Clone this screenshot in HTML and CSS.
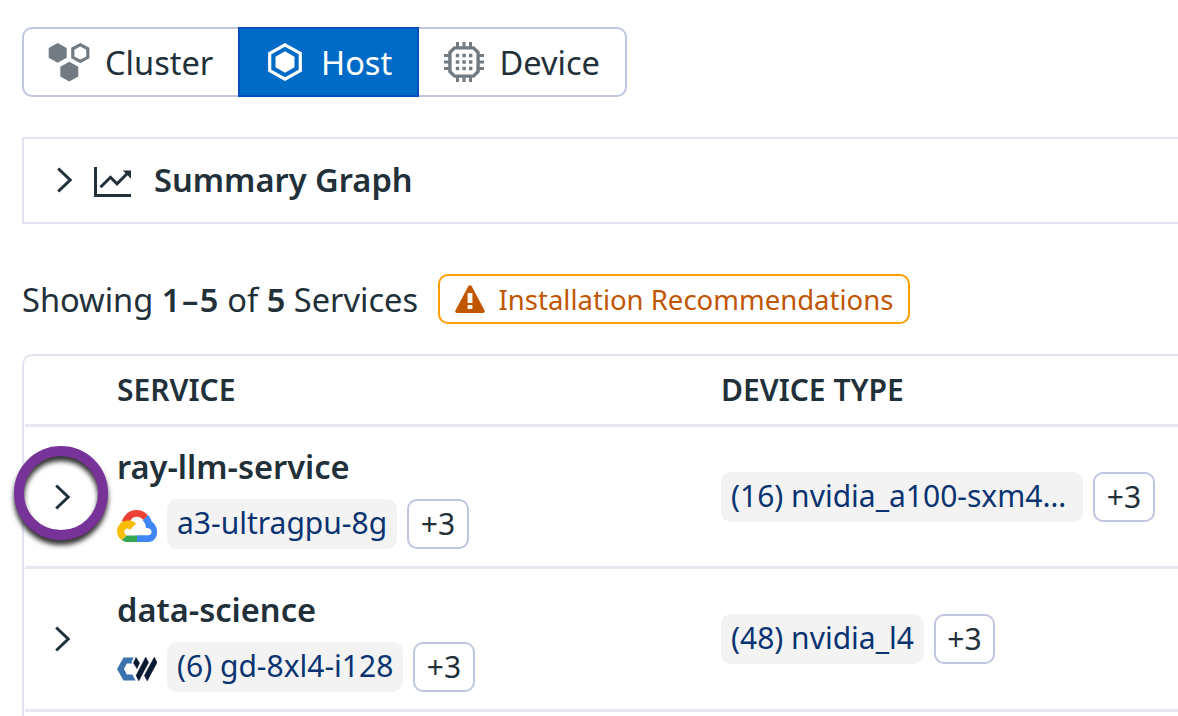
FILE: index.html
```html
<!DOCTYPE html>
<html lang="en">
<head>
<meta charset="utf-8">
<title>Services</title>
<link rel="stylesheet" href="styles.css">
</head>
<body>
<main class="page">
  <nav class="tabs">
    <button class="tab tab-cluster">
      <svg class="icon" width="42" height="42" viewBox="0 0 42 42" fill="#737b82">
        <path d="M9.7 2 18.7 7v9.8l-9 4.9-9-4.9V7zM21.3 20.8l9 5v9.8l-9 4.9-9-4.9v-9.8z"/>
        <path d="M32.3 3.700 39.800 7.800v8.500L32.300 20.400l-7.500-4.100V7.800z" fill="none" stroke="#737b82" stroke-width="3.200"/>
      </svg>
      <span>Cluster</span>
    </button>
    <button class="tab tab-host">
      <svg class="icon" width="36" height="40" viewBox="0 0 36 40">
        <path d="M18 2.900 33.300 11.400v17.200L18 37.100 2.700 28.600V11.400z" fill="none" stroke="#fff" stroke-width="3.200"/>
        <path d="M18 9.300 27.500 14.700v10.600L18 30.700 8.500 25.300V14.700z" fill="#fff"/>
      </svg>
      <span>Host</span>
    </button>
    <button class="tab tab-device">
      <svg class="icon" width="40" height="40" viewBox="0 0 40 40" fill="none" stroke="#737b82" stroke-width="3">
        <path d="M10.500 5.900h19l4.600 4.600v19l-4.600 4.600h-19l-4.600-4.600v-19z" stroke-width="3.400" stroke-linejoin="round"/>
        <path d="M13.500 0v5M20 0v5M26.500 0v5M13.500 35v5M20 35v5M26.500 35v5M0 13.500h5M0 20h5M0 26.500h5M35 13.500h5M35 20h5M35 26.500h5"/>
        <path d="M11.800 13.500h17M11.800 20h17M11.800 26.500h17" stroke-width="3.400" stroke-dasharray="3.400 3.200"/>
      </svg>
      <span>Device</span>
    </button>
  </nav>

  <section class="summary">
    <svg class="chevron" width="18" height="28" viewBox="0 0 18 28"><path d="M2.200 2.500 14.200 14 2.200 25.500"/></svg>
    <svg class="chart" width="38" height="31" viewBox="0 0 38 31" fill="none" stroke="#22303a" stroke-width="3">
      <path d="M1.500 0v28.500H37"/>
      <path d="M6.500 20.300 16.500 10.300 23 16.800 34 5.800"/>
      <path d="M28.800 3.500H37v8.200z" fill="#22303a" stroke="none"/>
    </svg>
    <h2 class="summary-title">Summary Graph</h2>
  </section>

  <div class="status">
    <p class="count">Showing <b class="range">1–5</b> of <b>5</b> Services</p>
    <button class="recommend">
      <svg width="30" height="28" viewBox="0 0 30 28">
        <path d="M13.300 1.200Q15-.8 16.700 1.200L29.600 25.500Q30.300 27.800 28 28H2Q-.3 27.800.4 25.500z" fill="#c15600"/>
        <path d="M12.600 8h4.800v10h-4.800zM12.600 20h4.800v4h-4.800z" fill="#fff"/>
      </svg>
      <span>Installation Recommendations</span>
    </button>
  </div>

  <section class="table">
    <div class="row head">
      <div></div>
      <div class="th">SERVICE</div>
      <div class="th">DEVICE TYPE</div>
    </div>
    <div class="row">
      <div class="expand">
        <svg class="chevron" width="18" height="28" viewBox="0 0 18 28"><path d="M2.200 2.500 14.200 14 2.200 25.500"/></svg>
        <span class="ring"></span>
      </div>
      <div class="service">
        <h3 class="name">ray-llm-service</h3>
        <div class="tags">
          <svg class="provider" width="40" height="32" viewBox="0 0 40 32">
            <path d="M26.400 10 31 5.400C25.200-1.600 14-1.700 8.300 5.200 6.500 7.300 5.300 9.300 4.900 11.700L13 11.300c3.200-6 9.300-5.600 13.400-1.300z" fill="#ea4335"/>
            <path d="M34.600 11.600C34 9 32.900 7 31 5.300L25.700 10.600c2 1.700 3.200 4.200 3.200 7.400 7.200-.3 7.200 7.300 2 7.300H20V32h11.500c9.800-.7 11.900-14.500 3.100-20.400z" fill="#4285f4"/>
            <path d="M9.500 25.400H20V32H11c-2.400 0-4.300-.8-6.200-2.100z" fill="#34a853"/>
            <path d="M11 10.400C.7 10.300-4.200 23.200 4.600 30l5-4.900c-5-2.500-1-9.400 3.400-5.400l6.200-6.200c-2.100-2.200-4.700-3.100-8.200-3.100z" fill="#fbbc05"/>
          </svg>
          <span class="pill pill-ultra">a3-ultragpu-8g</span>
          <span class="more">+3</span>
        </div>
      </div>
      <div class="devices">
        <span class="pill pill-a100">(16) nvidia_a100-sxm4…</span>
        <span class="more">+3</span>
      </div>
    </div>
    <div class="row row-tall">
      <div class="expand">
        <svg class="chevron" width="18" height="28" viewBox="0 0 18 28"><path d="M2.200 2.500 14.200 14 2.200 25.500"/></svg>
      </div>
      <div class="service">
        <h3 class="name">data-science</h3>
        <div class="tags">
          <svg class="provider" width="40" height="24" viewBox="0 0 40 24">
            <path d="M6.500.5H16.800L14.600 4.500 15 6.500H9.800L7 12l2.800 5.500H15.300L18.600 23.500H6.500L0 12z" fill="#3b73af"/>
            <path d="M19 .3 22.600 6 20 11.700 16.400 6zM28.700 0 31.600 5.500 21.800 24 19 18.500zM37.300 0 40.100 5.500 30.200 24 27.300 18.500z" fill="#0b1a33" stroke="#0b1a33" stroke-width=".4"/>
          </svg>
          <span class="pill pill-gd">(6) gd-8xl4-i128</span>
          <span class="more">+3</span>
        </div>
      </div>
      <div class="devices">
        <span class="pill pill-l4">(48) nvidia_l4</span>
        <span class="more more-narrow">+3</span>
      </div>
    </div>
  </section>
</main>
</body>
</html>
```
FILE: styles.css
```css
* { box-sizing: border-box; }
body {
  margin: 0;
  overflow: hidden;
  background: #fff;
  color: #22303a;
  font-family: "Noto Sans", sans-serif;
}
h2, h3, p { margin: 0; }
svg { flex: none; display: block; }
button { font: inherit; color: inherit; background: #fff; }

.page { height: 716px; padding: 27px 0 0 22px; overflow: hidden; }

.tabs { display: flex; width: 605px; height: 70px; }
.tab {
  display: flex;
  align-items: center;
  height: 70px;
  padding: 0;
  border: 2px solid #c0c6e0;
  font-size: 32.600px;
  line-height: 45px;
  white-space: nowrap;
}
.tab-cluster { width: 216px; padding-left: 24px; gap: 15px; border-right: 0; border-radius: 10px 0 0 10px; }
.tab-host { width: 181px; padding-left: 27px; gap: 18px; border-color: #0050bd; background: #006bc7; color: #fff; }
.tab-device { width: 208px; padding-left: 25px; gap: 15.500px; border-left: 0; border-radius: 0 10px 10px 0; }

.summary {
  display: flex;
  align-items: center;
  height: 87px;
  margin-top: 40px;
  padding: 0 0 2px 32px;
  border: 2px solid #e0e4ee;
  border-right: 0;
}
.chevron { fill: none; stroke: #22303a; stroke-width: 3; }
.chart { margin-left: 20px; margin-top: 5px; }
.summary-title { margin-left: 22px; font-size: 32.650px; line-height: 45px; font-weight: 600; }

.status { display: flex; align-items: center; height: 50px; margin-top: 50px; }
.count { width: 416px; font-size: 32.600px; line-height: 45px; white-space: nowrap; }
.count b { font-weight: 600; }
.count .range { letter-spacing: 1.600px; margin-right: -1.300px; }
.recommend {
  display: flex;
  align-items: center;
  gap: 13.500px;
  width: 472px;
  height: 50px;
  padding: 0 0 0 15px;
  border: 2px solid #ff9e00;
  border-radius: 10px;
  color: #c15600;
  font-size: 27.500px;
  white-space: nowrap;
}

.table {
  height: 380px;
  margin-top: 30px;
  border: 2px solid #e0e4f0;
  border-right: 0;
  border-radius: 10px 0 0 0;
}
.row {
  display: grid;
  grid-template-columns: 92px 604px 1fr;
  height: 142px;
  margin-left: 1px;
  border-bottom: 3px solid #e4e7f0;
}
.row-tall { height: 143px; }
.head { height: 71px; align-items: center; }
.th { padding-bottom: 1px; font-size: 30px; line-height: 40px; font-weight: 600; }
.expand { position: relative; padding: 56px 0 0 29px; }
.ring {
  position: absolute;
  left: -11px;
  top: 19px;
  width: 94px;
  height: 94px;
  border: 10px solid #783399;
  border-radius: 50%;
  filter: drop-shadow(0 5px 2.500px rgba(0, 0, 0, .8));
}
.service { padding-top: 17px; }
.row-tall .service { padding-top: 18px; }
.name { height: 45px; font-size: 32.600px; line-height: 45px; font-weight: 600; }
.tags { display: flex; align-items: center; height: 50px; margin-top: 10px; }
.provider { margin-top: 4px; }
.pill {
  height: 50px;
  padding-left: 10px;
  border-radius: 10px;
  background: #f3f3f3;
  color: #0a3371;
  font-size: 30px;
  line-height: 47px;
  white-space: nowrap;
}
.tags .pill { margin-left: 10px; }
.pill-ultra { width: 230px; }
.pill-gd { width: 236px; }
.pill-a100 { width: 362px; }
.pill-l4 { width: 203px; }
.more {
  width: 62px;
  height: 50px;
  margin-left: 10px;
  border: 2px solid #c0c6e0;
  border-radius: 10px;
  font-size: 30px;
  line-height: 45px;
  text-align: center;
}
.more-narrow { width: 61px; }
.devices { display: flex; padding-top: 45px; }
```
